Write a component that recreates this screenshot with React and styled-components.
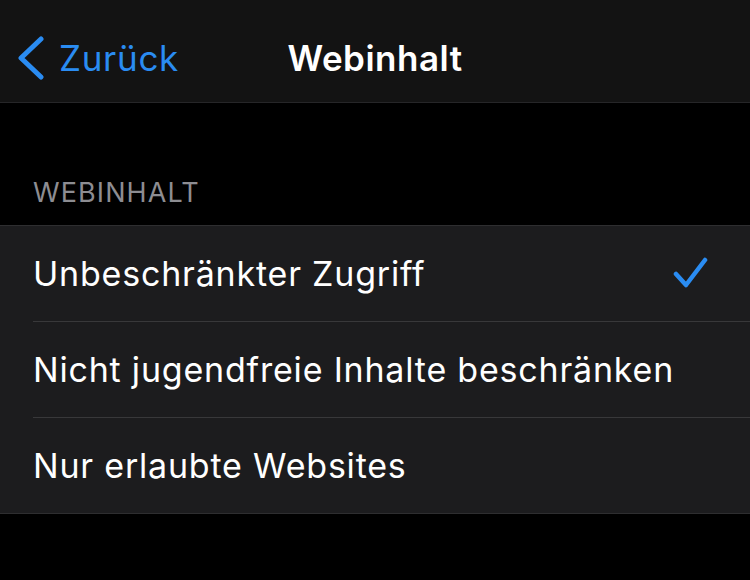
import React from 'react';
import styled, { createGlobalStyle } from 'styled-components';

const GlobalStyle = createGlobalStyle`
  html, body {
    margin: 0;
    padding: 0;
    background: #000;
    font-family: Inter, "Noto Sans", sans-serif;
    -webkit-font-smoothing: antialiased;
  }
`;

const Screen = styled.div`
  width: 750px;
  height: 580px;
  background: #000;
  overflow: hidden;
`;

const NavBar = styled.header`
  box-sizing: border-box;
  height: 103px;
  padding-top: 14px;
  background: #131313;
  border-bottom: 1px solid #262628;
  display: grid;
  grid-template-columns: 1fr auto 1fr;
  align-items: center;
`;

const BackButton = styled.button`
  justify-self: start;
  display: flex;
  align-items: center;
  gap: 14px;
  padding: 0 0 0 17px;
  background: none;
  border: none;
  color: #2a8cf2;
  font-family: inherit;
  font-size: 35px;
  letter-spacing: 0.7px;
  cursor: pointer;
`;

const Title = styled.h1`
  margin: 0;
  color: #fff;
  font-size: 35px;
  font-weight: 600;
  letter-spacing: 0.5px;
`;

const SectionHeader = styled.div`
  padding: 74px 0 0 33px;
  height: 48px;
  color: #8d8d92;
  font-size: 27px;
  line-height: 32px;
  letter-spacing: 1.1px;
`;

const Group = styled.ul`
  list-style: none;
  margin: 0;
  padding: 0 0 0 33px;
  background: #1c1c1e;
  border-top: 1px solid #2e2e30;
  border-bottom: 1px solid #2e2e30;
`;

const Row = styled.li`
  height: 95px;
  display: flex;
  align-items: center;
  justify-content: space-between;
  padding-right: 40px;
  color: #fff;
  font-size: 34px;
  letter-spacing: 0.8px;
  border-top: ${p => (p.$first ? 'none' : '1px solid #38383a')};
`;

const Chevron = () => (
  <svg width="28" height="44" viewBox="0 0 28 44">
    <polyline points="24,3 4,22 24,41" fill="none" stroke="#2a8cf2" strokeWidth="5" strokeLinecap="round" strokeLinejoin="round" />
  </svg>
);

const Check = () => (
  <svg width="38" height="34" viewBox="0 0 38 34">
    <polyline points="4,17 14,28 33,3" fill="none" stroke="#2a8cf2" strokeWidth="4.5" strokeLinecap="round" strokeLinejoin="round" />
  </svg>
);

const options = [
  { label: 'Unbeschränkter Zugriff', checked: true },
  { label: 'Nicht jugendfreie Inhalte beschränken' },
  { label: 'Nur erlaubte Websites' },
];

export default function App() {
  return (
    <Screen>
      <GlobalStyle />
      <NavBar>
        <BackButton>
          <Chevron />
          Zurück
        </BackButton>
        <Title>Webinhalt</Title>
        <span />
      </NavBar>
      <SectionHeader>WEBINHALT</SectionHeader>
      <Group>
        {options.map((o, i) => (
          <Row key={o.label} $first={i === 0}>
            {o.label}
            {o.checked && <Check />}
          </Row>
        ))}
      </Group>
    </Screen>
  );
}
